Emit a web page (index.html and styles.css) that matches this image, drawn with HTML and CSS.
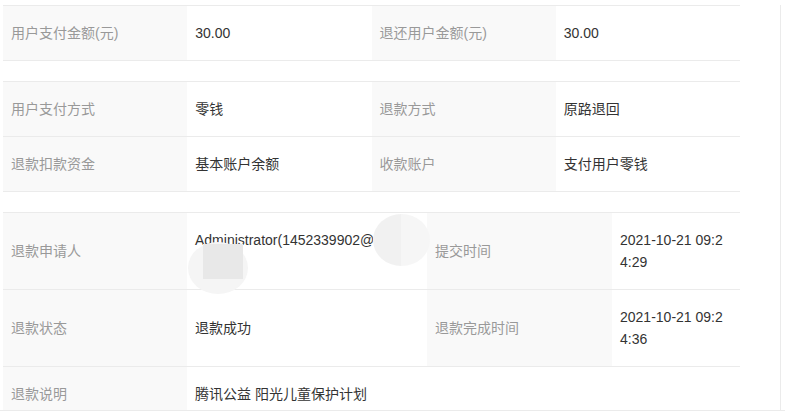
FILE: index.html
```html
<!DOCTYPE html>
<html lang="zh">
<head>
<meta charset="utf-8">
<link rel="stylesheet" href="styles.css">
</head>
<body>
<div class="viewport">
  <div class="content">
    <table class="info even">
      <tr>
        <td class="lbl">用户支付金额(元)</td><td class="val">30.00</td>
        <td class="lbl">退还用户金额(元)</td><td class="val">30.00</td>
      </tr>
    </table>
    <table class="info even">
      <tr>
        <td class="lbl">用户支付方式</td><td class="val">零钱</td>
        <td class="lbl">退款方式</td><td class="val">原路退回</td>
      </tr>
      <tr>
        <td class="lbl">退款扣款资金</td><td class="val">基本账户余额</td>
        <td class="lbl">收款账户</td><td class="val">支付用户零钱</td>
      </tr>
    </table>
    <div class="blockwrap">
      <table class="info uneven">
        <colgroup><col class="c1"><col class="c2"><col class="c3"><col class="c4"></colgroup>
        <tr>
          <td class="lbl">退款申请人</td><td class="val top">Administrator(1452339902@</td>
          <td class="lbl">提交时间</td><td class="val date">2021-10-21 09:24:29</td>
        </tr>
        <tr>
          <td class="lbl">退款状态</td><td class="val">退款成功</td>
          <td class="lbl">退款完成时间</td><td class="val date">2021-10-21 09:24:36</td>
        </tr>
        <tr>
          <td class="lbl">退款说明</td><td class="val last" colspan="3">腾讯公益 阳光儿童保护计划</td>
        </tr>
      </table>
      <div class="blur blur-a"><span class="blur-core"></span></div>
      <div class="blur blur-b"></div>
    </div>
  </div>
</div>
</body>
</html>
```

FILE: styles.css
```css
html, body {
  margin: 0;
  padding: 0;
  background: #fff;
}
body {
  font-family: "Liberation Sans", Arial, "Noto Sans CJK SC", sans-serif;
  font-size: 14px;
  line-height: 22px;
}
.viewport {
  height: 410px;
  overflow: hidden;
  border-bottom: 1px solid #ebebeb;
}
.content {
  margin-top: 5px;
  border-right: 1px solid #ebebeb;
  padding-left: 3px;
  box-sizing: border-box;
  width: 781px;
  padding-bottom: 40px;
}
.info {
  width: 737px;
  border-collapse: collapse;
  table-layout: fixed;
  margin-bottom: 20px;
  border-top: 1px solid #ebebeb;
}
.info td {
  padding: 16px 8px;
  border-bottom: 1px solid #ebebeb;
  vertical-align: middle;
}
.info .lbl {
  background: #f9f9f9;
  color: #999;
}
.info .val {
  color: #333;
}
.info .val.top {
  vertical-align: top;
}
.info .val.date {
  word-break: break-all;
  padding-right: 14px;
}
.info .val.last {
  border-bottom: none;
}
.uneven .c1 { width: 184px; }
.uneven .c2 { width: 240px; }
.uneven .c3 { width: 185px; }
.uneven .c4 { width: 128px; }
.blockwrap {
  position: relative;
}
.blur {
  position: absolute;
  border-radius: 50%;
}
.blur-a {
  left: 185px;
  top: 30px;
  width: 60px;
  height: 52px;
  background: #f5f5f5;
}
.blur-core {
  position: absolute;
  left: 15px;
  top: 2px;
  width: 40px;
  height: 35px;
  background: #e8e8e8;
}
.blur-b {
  left: 370px;
  top: 2px;
  width: 57px;
  height: 52px;
  background: linear-gradient(to right, #f1f1f1 50%, #f6f6f6 50%);
}
```
